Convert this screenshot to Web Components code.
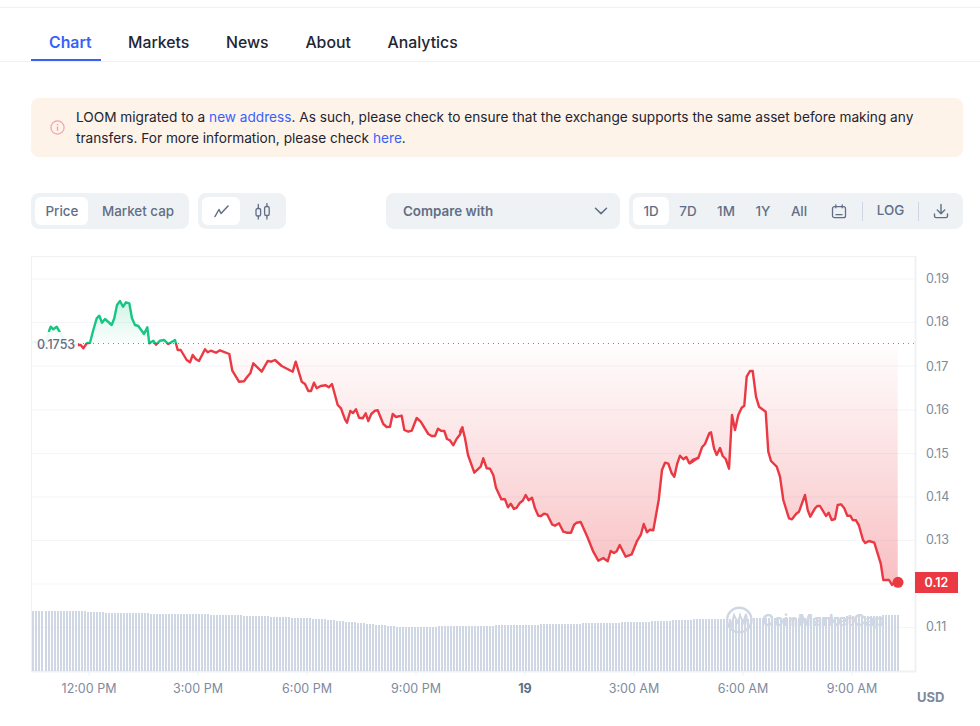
<!doctype html>
<html><head><meta charset="utf-8"><style>
html,body{margin:0;background:#fff}
body{font-family:Inter,"Liberation Sans",sans-serif;width:980px;height:726px;overflow:hidden}
</style></head><body>
<cmc-page>
  <cmc-tabs></cmc-tabs>
  <cmc-alert><div>LOOM migrated to a <a href="#">new address</a>. As such, please check to ensure that the exchange supports the same asset before making any</div><div>transfers. For more information, please check <a href="#">here</a>.</div></cmc-alert>
  <cmc-toolbar></cmc-toolbar>
  <cmc-chart></cmc-chart>
</cmc-page>
<style>cmc-alert a{color:#3861fb;text-decoration:none}cmc-alert div{white-space:nowrap}</style>
<script>
class CmcPage extends HTMLElement{constructor(){super();this.attachShadow({mode:'open'}).innerHTML=`<style>:host{display:block;width:980px;height:726px;box-sizing:border-box;padding-top:7px;overflow:hidden}
.rule{height:1px;background:#eff2f5}</style><div class="rule"></div><slot></slot>`}}
customElements.define('cmc-page',CmcPage);

class CmcTabs extends HTMLElement{constructor(){super();this.attachShadow({mode:'open'}).innerHTML=`<style>
:host{display:flex;height:54px;box-sizing:border-box;padding-left:31px;border-bottom:1px solid #eff2f5;font:500 15.8px/20px Inter,sans-serif;color:#222531}
div{height:53px;box-sizing:border-box;padding:25px 0 0;margin-right:36.8px;white-space:nowrap}
.on{color:#3861fb;font-weight:600;width:70px;margin-right:27px;padding-left:18px;border-bottom:2px solid #3861fb}
</style><div class="on">Chart</div><div>Markets</div><div>News</div><div>About</div><div>Analytics</div>`}}
customElements.define('cmc-tabs',CmcTabs);

class CmcAlert extends HTMLElement{constructor(){super();this.attachShadow({mode:'open'}).innerHTML=`<style>
:host{display:flex;align-items:center;box-sizing:border-box;margin:36px 17px 0 31px;height:59px;padding:0 40px 0 19px;background:#fef3e9;border-radius:8px;font:400 13.65px/21px Inter,sans-serif;color:#222531}
svg{flex:none;width:15px;height:15px;margin-right:11px}
</style><svg viewBox="0 0 15 15" fill="none" stroke="#f6a0a6" stroke-width="1.2"><circle cx="7.5" cy="7.5" r="6.6"/><path d="M7.5 6.6v4.2M7.5 4v1.3" stroke-width="1.4"/></svg><span><slot></slot></span>`}}
customElements.define('cmc-alert',CmcAlert);

class CmcGroup extends HTMLElement{constructor(){super();this.attachShadow({mode:'open'}).innerHTML=`<style>
:host{display:flex;align-items:center;box-sizing:border-box;height:36px;padding:0 4px;background:#eff2f5;border-radius:8px;font:500 13.4px/18px Inter,sans-serif;color:#616e85}
</style><slot></slot>`}}
customElements.define('cmc-group',CmcGroup);

class CmcBtn extends HTMLElement{constructor(){super();this.attachShadow({mode:'open'}).innerHTML=`<style>
:host{display:flex;flex:none;align-items:center;justify-content:center;box-sizing:border-box;height:28px;border-radius:6px;white-space:nowrap}
:host([on]){background:#fff}
</style><slot></slot>`}}
customElements.define('cmc-btn',CmcBtn);

class CmcToolbar extends HTMLElement{constructor(){super();this.attachShadow({mode:'open'}).innerHTML=`<style>
:host{display:flex;margin:36px 17px 0 31px;height:36px}
svg{display:block;fill:none;stroke:#616e85;stroke-width:1.5;stroke-linecap:round;stroke-linejoin:round}
.sep{flex:none;width:1px;height:19px;background:#cfd6e4}
</style>
<cmc-group style="width:158px"><cmc-btn on style="width:53px;padding-left:1px">Price</cmc-btn><cmc-btn style="width:100px">Market cap</cmc-btn></cmc-group>
<cmc-group style="width:88px;margin-left:9px"><cmc-btn on style="width:38px"><svg width="16" height="14" viewBox="0 0 16 14"><path d="M2 12.5L6 5.5L8 9.5L15 2"/></svg></cmc-btn><cmc-btn style="width:46px"><svg width="18" height="17" viewBox="0 0 18 17" style="stroke-width:1.3"><rect x="2" y="5.5" width="4.6" height="7.5" rx="1.6"/><path d="M4.3 1.5v4M4.3 13v3"/><rect x="10.6" y="3.5" width="4.6" height="9" rx="1.6"/><path d="M12.9 .5v3M12.9 12.5v3.5"/></svg></cmc-btn></cmc-group>
<cmc-group style="width:234px;margin-left:100px;padding:0 12px 0 17px;justify-content:space-between;font-weight:600"><span>Compare with</span><svg width="14" height="8" viewBox="0 0 14 8"><path d="M1.5 1.2L7 6.6L12.5 1.2"/></svg></cmc-group>
<cmc-group style="width:334px;margin-left:9px">
<cmc-btn on style="width:36px">1D</cmc-btn><cmc-btn style="width:38px">7D</cmc-btn><cmc-btn style="width:38px">1M</cmc-btn><cmc-btn style="width:36px">1Y</cmc-btn><cmc-btn style="width:36px">All</cmc-btn>
<cmc-btn style="width:44px"><svg width="16" height="15" viewBox="0 0 16 15" style="stroke-width:1.3"><rect x="1.5" y="2.7" width="13" height="11" rx="2"/><path d="M4.8 .8v3M11.2 .8v3M5 10.7h6"/></svg></cmc-btn>
<div class="sep" style="margin-left:1px"></div>
<cmc-btn style="width:55px;margin-top:-2px">LOG</cmc-btn>
<div class="sep"></div>
<cmc-btn style="width:44px"><svg width="16" height="16" viewBox="0 0 16 16" style="stroke-width:1.4"><path d="M8 1.5v9M4.3 7L8 10.7L11.7 7M1.5 11v2a1.6 1.6 0 0 0 1.6 1.6h9.8a1.6 1.6 0 0 0 1.6-1.6v-2"/></svg></cmc-btn>
</cmc-group>`}}
customElements.define('cmc-toolbar',CmcToolbar);

const z=(ox,oy,a)=>{const r=[];for(let i=0;i<a.length;i+=2)r.push([ox+a[i]/3,oy+a[i+1]/3]);return r};
const PTS=[
 ...z(20,250,[36,277,50,277,65,290,80,275,88,241,92,230,100,238,110,230,118,244,130,265,150,297,165,285,182,285,190,295,200,280,210,278,220,240,230,205,238,197,246,218,255,207,275,225,283,205,291,165,300,153,309,170,318,157,328,160,336,205,345,225,355,228,372,252,382,232,388,280,400,272,408,284,420,272,432,270,445,282,465,270]),
 ...z(170,340,[15,0,23,30,32,30,50,60,60,67,68,45,78,58,87,63,105,28,113,37,122,32,138,38,150,31,178,42,187,92,207,125,222,124,232,110,241,100,250,70,275,95,293,63,303,65,315,60,335,78,368,95,377,65,395,125,405,132,415,153,423,153,432,128,440,145,452,138,467,136,476,142,486,132,503,195,513,205,525,238,531,248,541,213,549,219,558,208,567,233,578,235,587,220,595,243,604,222,615,212,623,211,640,252,650,261,660,260,668,222,678,231,695,227,703,270,715,275,725,272,740,234,752,245,775,282,785,288,795,288,804,266,813,272,823,273,831,297,840,301,850,316,860,296,869,285,878,263]),
 ...z(460,420,[0,35,7,22,15,55,24,105,33,130,43,158,62,140,70,115,80,145,90,146,100,165,108,203,124,238,135,238,144,262,152,251,162,267,170,263,180,248,188,242,197,225,206,241,216,233,225,265,235,287,243,288,252,281,262,284,277,314,285,317,297,310,310,335,320,338,333,338,342,315,350,308,362,306,382,350,400,395,415,422,430,414,443,424,452,393,462,399,470,394,479,375,497,410,515,403,530,365,543,343,551,312,561,337,570,329,580,331,596,240,606,150,615,128,625,131,635,160,643,170,652,130,660,107,670,118,679,111,688,130,698,120,715,113]),
 ...z(690,360,[0,310,8,300,25,294,36,262,45,252,58,220,63,217,72,265,80,285,90,264,98,288,107,297,117,326,126,165,135,210,145,165,155,143,163,137,170,50,180,33,188,33,198,110,207,140,227,155,235,275,243,303,260,320,270,350,280,420,297,475,306,478,318,462,327,455,345,405,353,450,361,470,375,445,382,438,390,438,408,468,416,458,425,480,435,477,443,435,453,433,463,445,472,467,481,467,488,480,498,481,507,497,519,540,526,549,537,543,553,548,572,610,580,660,597,660,606,675,613,668,623,667])
];
const BASE=343;
const lineD=PTS.map((p,i)=>(i?'L':'M')+p[0].toFixed(1)+' '+p[1].toFixed(1)).join('');
const areaD=lineD+`L${PTS[PTS.length-1][0].toFixed(1)} ${BASE}L${PTS[0][0].toFixed(1)} ${BASE}Z`;
const barTop=x=>{const k=[[32,611],[85,611.5],[105,612.5],[150,613.5],[190,614],[260,616],[320,619],[360,623],[400,627],[470,626],[560,624],[640,622],[700,619],[800,618],[860,616],[899,615]];
 for(let i=1;i<k.length;i++)if(x<=k[i][0]){const t=(x-k[i-1][0])/(k[i][0]-k[i-1][0]);return k[i-1][1]+t*(k[i][1]-k[i-1][1])}return 615};
let bars='';for(let x=32;x<898;x+=3){if(x===44)x=45;const t=Math.round(barTop(x));bars+=`M${x} ${t}h2V671h-2Z`}
const gridY=[279,322.5,366,410,453.5,497,540.5,584,627.5];
const yl=[['0.19',278],['0.18',321.5],['0.17',366],['0.16',409.5],['0.15',453],['0.14',496.5],['0.13',539.5],['0.11',626.5]];
const xl=[['12:00 PM',89],['3:00 PM',198],['6:00 PM',307],['9:00 PM',416],['19',525],['3:00 AM',634],['6:00 AM',743],['9:00 AM',852]];
class CmcChart extends HTMLElement{constructor(){super();this.attachShadow({mode:'open'}).innerHTML=`<style>
:host{display:block;margin-top:21px;height:476px}
svg{display:block;font-family:Inter,sans-serif}
text{font-size:12.5px;fill:#808a9d}
</style>
<svg width="980" height="476" viewBox="0 250 980 476">
<defs>
<linearGradient id="r" gradientUnits="userSpaceOnUse" x1="0" y1="343" x2="0" y2="584"><stop offset="0" stop-color="#ea3943" stop-opacity=".01"/><stop offset="1" stop-color="#ea3943" stop-opacity=".32"/></linearGradient>
<linearGradient id="g" gradientUnits="userSpaceOnUse" x1="0" y1="343" x2="0" y2="300"><stop offset="0" stop-color="#16c784" stop-opacity=".02"/><stop offset="1" stop-color="#16c784" stop-opacity=".2"/></linearGradient>
<clipPath id="above"><rect x="0" y="250" width="980" height="${BASE-250}"/></clipPath>
<clipPath id="below"><rect x="0" y="${BASE}" width="980" height="400"/></clipPath>
</defs>
<path d="${gridY.map(y=>`M32 ${y}H915`).join('')}" stroke="#f3f5f8" fill="none"/>
<path d="M31.5 671V256.5H915" stroke="#eff2f5" fill="none"/>
<path d="M915.5 256V672M31 671.5H916" stroke="#eff2f5" stroke-width="2" fill="none"/>
<path d="${xl.map(l=>`M${l[1]} 672v4`).join('')}" stroke="#eff2f5" fill="none"/>
<path d="${bars}" fill="#cfd6e4"/>
<g fill="none" stroke="#cfd6e4"><circle cx="739.3" cy="620" r="12.2" stroke-width="2.4"/><path d="M731 627l3-12 4 8 2-8 3 8 3-9 2 12" stroke-width="2"/></g>
<text x="762" y="626" style="font-size:16px;font-weight:700;fill:#cfd6e4">CoinMarketCap</text>
<path d="${areaD}" fill="url(#r)" clip-path="url(#below)"/>
<path d="${areaD}" fill="url(#g)" clip-path="url(#above)"/>
<path d="M78 343.5H915" stroke="#808a9d" stroke-dasharray="1 4" fill="none"/>
<path d="${lineD}" fill="none" stroke="#ea3943" stroke-width="2.4" stroke-linejoin="round" clip-path="url(#below)"/>
<path d="${lineD}" fill="none" stroke="#16c784" stroke-width="2.4" stroke-linejoin="round" clip-path="url(#above)"/>
<circle cx="898" cy="582.3" r="5.5" fill="#ea3943"/>
<rect x="32" y="332" width="46" height="20" fill="#fff" fill-opacity=".9"/>
<text x="37" y="349" style="font-size:12.5px;font-weight:500;fill:#616e85">0.1753</text>
${yl.map(l=>`<text x="926" y="${l[1]+4.5}">${l[0]}</text>`).join('')}
<rect x="915" y="572" width="43" height="21" fill="#ea3943"/>
<text x="936.5" y="587" text-anchor="middle" style="font-size:12.5px;font-weight:600;fill:#fff">0.12</text>
${xl.map(l=>`<text x="${l[1]}" y="693" text-anchor="middle" ${l[0]==='19'?'style="font-weight:700;fill:#616e85"':''}>${l[0]}</text>`).join('')}
<text x="917" y="702" style="font-size:13px;font-weight:700">USD</text>
</svg>`}}
customElements.define('cmc-chart',CmcChart);
</script>
</body></html>
